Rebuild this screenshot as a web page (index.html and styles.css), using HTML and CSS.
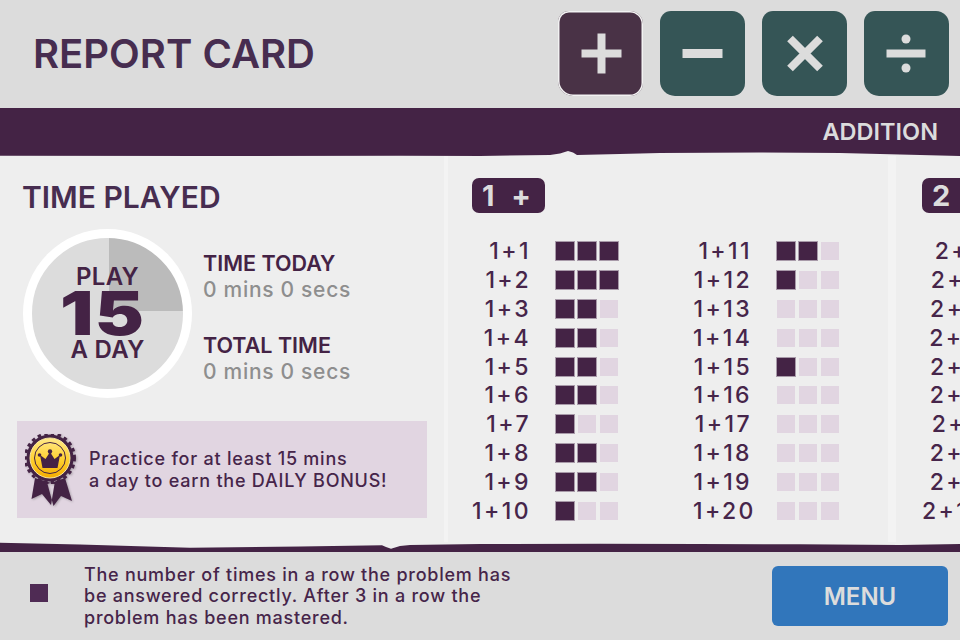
FILE: index.html
```html
<!DOCTYPE html>
<html lang="en">
<head>
<meta charset="utf-8">
<title>Report Card</title>
<link rel="stylesheet" href="styles.css">
</head>
<body>
<div class="app">
  <header class="top">
    <h1 class="title">REPORT CARD</h1>
    <nav class="ops">
      <button class="op op-on"><svg viewBox="0 0 85 85"><path d="M43.500 22.500v40M23.500 42.500h40" class="glyph thin"/></svg></button>
      <button class="op"><svg viewBox="0 0 85 85"><path d="M22.500 42.500h40" class="glyph"/></svg></button>
      <button class="op"><svg viewBox="0 0 85 85"><path d="M28 27.500l30 30M58 27.500l-30 30" class="glyph thin"/></svg></button>
      <button class="op"><svg viewBox="0 0 85 85"><path d="M22.500 42.500h39" class="glyph thin"/><circle cx="42" cy="28" r="4.500" class="dot"/><circle cx="42" cy="57" r="4.500" class="dot"/></svg></button>
    </nav>
  </header>
  <div class="band"><span class="band-label">ADDITION</span></div>
  <svg class="edge" viewBox="0 0 960 8" preserveAspectRatio="none"><path class="paper" d="M0 8V7.800L200 8 400 7.800 480 8 550 7 560 5.500 568 3 573 4.500 577 7 620 6 660 5 760 4.500 840 5 900 6.500 960 8Z"/></svg>
  <main class="sheet">
    <section class="played">
      <h2 class="played-title">TIME PLAYED</h2>
      <div class="clock-row">
        <div class="clock">
          <span class="clock-a">PLAY</span>
          <span class="clock-n">15</span>
          <span class="clock-b">A DAY</span>
        </div>
        <div class="times">
          <div class="time"><div class="time-k">TIME TODAY</div><div class="time-v">0 mins 0 secs</div></div>
          <div class="time"><div class="time-k">TOTAL TIME</div><div class="time-v">0 mins 0 secs</div></div>
        </div>
      </div>
      <div class="bonus">
        <svg class="medal" viewBox="0 0 52 72">
          <defs>
            <linearGradient id="gold" x1="0" y1="0" x2="0" y2="1">
              <stop offset="0" stop-color="#ffe98a"/>
              <stop offset=".55" stop-color="#ffd02e"/>
              <stop offset="1" stop-color="#f4ad00"/>
            </linearGradient>
          </defs>
          <path class="ribbon" d="M10 44L6.500 65 17 60 26 71 29.500 50zM40 44L47 67 36 62 28.500 72 22.500 50z"/>
          <circle class="ribbon" cx="25" cy="24" r="23.500"/>
          <circle class="teeth" cx="25" cy="24" r="24.500"/>
          <circle class="coin" cx="25" cy="24" r="20"/>
          <circle class="coin-ring" cx="25" cy="24" r="15.500"/>
          <path class="ribbon" d="M17.500 34L15 21 20.500 25 25 18 29.500 25 35 21 32.500 34z"/>
          <circle class="ribbon" cx="25" cy="17.500" r="2.200"/>
          <circle class="ribbon" cx="14.500" cy="21" r="1.800"/>
          <circle class="ribbon" cx="35.500" cy="21" r="1.800"/>
        </svg>
        <p class="bonus-text">Practice for at least 15 mins<br>a day to earn the DAILY BONUS!</p>
      </div>
    </section>
    <section class="facts">
      <div class="chip">1 +</div>
      <div class="fact-cols">
        <div class="fact-col">
          <div class="fact"><span class="q">1+1</span><span class="s on"></span><span class="s on"></span><span class="s on"></span></div>
          <div class="fact"><span class="q">1+2</span><span class="s on"></span><span class="s on"></span><span class="s on"></span></div>
          <div class="fact"><span class="q">1+3</span><span class="s on"></span><span class="s on"></span><span class="s"></span></div>
          <div class="fact"><span class="q">1+4</span><span class="s on"></span><span class="s on"></span><span class="s"></span></div>
          <div class="fact"><span class="q">1+5</span><span class="s on"></span><span class="s on"></span><span class="s"></span></div>
          <div class="fact"><span class="q">1+6</span><span class="s on"></span><span class="s on"></span><span class="s"></span></div>
          <div class="fact"><span class="q">1+7</span><span class="s on"></span><span class="s"></span><span class="s"></span></div>
          <div class="fact"><span class="q">1+8</span><span class="s on"></span><span class="s on"></span><span class="s"></span></div>
          <div class="fact"><span class="q">1+9</span><span class="s on"></span><span class="s on"></span><span class="s"></span></div>
          <div class="fact"><span class="q">1+10</span><span class="s on"></span><span class="s"></span><span class="s"></span></div>
        </div>
        <div class="fact-col">
          <div class="fact"><span class="q">1+11</span><span class="s on"></span><span class="s on"></span><span class="s"></span></div>
          <div class="fact"><span class="q">1+12</span><span class="s on"></span><span class="s"></span><span class="s"></span></div>
          <div class="fact"><span class="q">1+13</span><span class="s"></span><span class="s"></span><span class="s"></span></div>
          <div class="fact"><span class="q">1+14</span><span class="s"></span><span class="s"></span><span class="s"></span></div>
          <div class="fact"><span class="q">1+15</span><span class="s on"></span><span class="s"></span><span class="s"></span></div>
          <div class="fact"><span class="q">1+16</span><span class="s"></span><span class="s"></span><span class="s"></span></div>
          <div class="fact"><span class="q">1+17</span><span class="s"></span><span class="s"></span><span class="s"></span></div>
          <div class="fact"><span class="q">1+18</span><span class="s"></span><span class="s"></span><span class="s"></span></div>
          <div class="fact"><span class="q">1+19</span><span class="s"></span><span class="s"></span><span class="s"></span></div>
          <div class="fact"><span class="q">1+20</span><span class="s"></span><span class="s"></span><span class="s"></span></div>
        </div>
      </div>
    </section>
    <section class="facts">
      <div class="chip">2 +</div>
      <div class="fact-cols">
        <div class="fact-col">
          <div class="fact"><span class="q">2+1</span></div>
          <div class="fact"><span class="q">2+2</span></div>
          <div class="fact"><span class="q">2+3</span></div>
          <div class="fact"><span class="q">2+4</span></div>
          <div class="fact"><span class="q">2+5</span></div>
          <div class="fact"><span class="q">2+6</span></div>
          <div class="fact"><span class="q">2+7</span></div>
          <div class="fact"><span class="q">2+8</span></div>
          <div class="fact"><span class="q">2+9</span></div>
          <div class="fact"><span class="q">2+10</span></div>
        </div>
      </div>
    </section>
  </main>
  <svg class="edge edge-low" viewBox="0 0 960 10" preserveAspectRatio="none"><path class="paper" d="M0 0H960V2L900 3 800 2.300 700 2 600 1.800 480 2 410 3 400 4 391 6.700 386 5 382 3.300 300 4.500 190 5.700 80 2.500 0 .7Z"/></svg>
  <footer class="bottom">
    <span class="legend-box"></span>
    <p class="legend">The number of times in a row the problem has<br>be answered correctly. After 3 in a row the<br>problem has been mastered.</p>
    <button class="menu">MENU</button>
  </footer>
</div>
</body>
</html>
```
FILE: styles.css
```css
* { box-sizing: border-box; }
html, body { margin: 0; padding: 0; }
body { width: 960px; height: 640px; overflow: hidden; background: #dcdcdc; font-family: "Inter", "Liberation Sans", sans-serif; color: #46254a; }
.app { width: 960px; height: 640px; display: flex; flex-direction: column; overflow: hidden; }

.top { height: 108px; flex: none; display: flex; align-items: center; justify-content: space-between; padding: 0 11px 1px 33px; }
.title { margin: 0; font-size: 40px; font-weight: 600; color: #472d50; letter-spacing: 0; }
.ops { display: flex; gap: 17px; }
.op { width: 85px; height: 85px; padding: 0; border: 0; border-radius: 11px 13px 13px 15px; background: #355556; display: block; }
.op svg { display: block; width: 85px; height: 85px; }
.op-on { background: #493246; box-shadow: inset 0 0 0 1.500px #f2f2f2; }
.glyph { stroke: #dcdcdc; stroke-width: 9; fill: none; }
.glyph.thin { stroke-width: 8; }
.dot { fill: #dcdcdc; }

.band { height: 40px; flex: none; background: #442345; display: flex; justify-content: flex-end; align-items: center; padding: 6px 22px 0 0; }
.band-label { font-size: 23.500px; font-weight: 600; color: #dcdcdc; }
.edge { display: block; width: 960px; height: 8px; flex: none; background: #442345; }
.paper { fill: #eeeeee; }
.edge-low { height: 10px; }

.sheet { height: 386px; flex: none; background: #eeeeee; display: flex; overflow: hidden; }
.played { width: 444px; flex: none; padding: 23px 17px 0 17px; }
.played-title { margin: 0 0 0 5px; font-size: 30px; line-height: 36px; font-weight: 600; color: #472d50; }
.clock-row { display: flex; margin: 14px 0 0 6px; }
.clock { width: 169px; height: 169px; flex: none; border-radius: 50%; border: 9px solid #ffffff; background: conic-gradient(from 0deg at 51% 48.300%, #bbbbbb 0 25%, #dcdcdc 25% 100%); display: flex; flex-direction: column; align-items: center; color: #442345; }
.clock-a { font-size: 24px; line-height: 26px; font-weight: 600; margin-top: 26px; letter-spacing: .3px; }
.clock-n { font-size: 60px; line-height: 47px; font-weight: 900; letter-spacing: 1px; margin-right: 10px; transform: scaleX(1.230); }
.clock-b { font-size: 24px; line-height: 26px; font-weight: 600; letter-spacing: .3px; }
.times { margin-left: 11px; padding-top: 20px; display: flex; flex-direction: column; gap: 28px; }
.time-k { font-size: 21.500px; line-height: 28px; font-weight: 600; color: #442345; }
.time-v { font-size: 21px; line-height: 26px; font-weight: 500; letter-spacing: .7px; color: #8e8e8e; }
.bonus { width: 410px; height: 97px; margin-top: 23px; background: #e1d5e1; display: flex; align-items: center; padding-left: 8px; }
.medal { width: 52px; height: 72px; flex: none; filter: drop-shadow(1.500px 1.500px 1px rgba(0,0,0,.25)); }
.ribbon { fill: #442345; }
.teeth { fill: none; stroke: #442345; stroke-width: 3; stroke-dasharray: 3.500 3.300; }
.coin { fill: url(#gold); stroke: #f7e6a0; stroke-width: 1; }
.coin-ring { fill: none; stroke: #442345; stroke-width: 1; }
.bonus-text { margin: 0 0 0 12px; font-size: 18px; line-height: 21.500px; font-weight: 500; letter-spacing: .77px; color: #46254a; white-space: nowrap; }

.facts { width: 444px; flex: none; padding: 21.500px 0 0 24px; border-left: 4px solid #f3f3f3; }
.facts + .facts { width: 100px; border-left-width: 8px; padding-left: 26px; }
.chip { width: 73px; height: 35px; border-radius: 7px; background: #442345; color: #dcdcdc; font-size: 29px; line-height: 35px; font-weight: 700; letter-spacing: 3px; word-spacing: 4px; padding-left: 10px; white-space: nowrap; }
.fact-cols { display: flex; margin-top: 24.500px; }
.fact-col { width: 221px; flex: none; }
.fact { height: 28.800px; display: flex; align-items: center; gap: 4px; }
.q { width: 59px; margin-right: 21px; text-align: right; font-size: 23px; font-weight: 500; letter-spacing: 2.400px; color: #46254a; white-space: nowrap; }
.s { width: 18px; height: 18px; background: #e1d5e1; }
.s.on { background: #442345; box-shadow: 0 0 0 1px #a89aa9; }

.bottom { flex: 1; display: flex; align-items: center; padding: 0 12px 0 30px; }
.legend-box { width: 18px; height: 18px; margin-top: -6px; background: #4f2b54; flex: none; }
.legend { margin: 0 0 0 36px; font-size: 18px; line-height: 21.500px; font-weight: 500; letter-spacing: .75px; color: #46254a; white-space: nowrap; flex: 1; }
.menu { width: 176px; height: 60px; flex: none; padding: 0; border: 0; border-radius: 6px; background: #3176bb; color: #dcdcdc; font-family: inherit; font-size: 24px; font-weight: 600; }
```
